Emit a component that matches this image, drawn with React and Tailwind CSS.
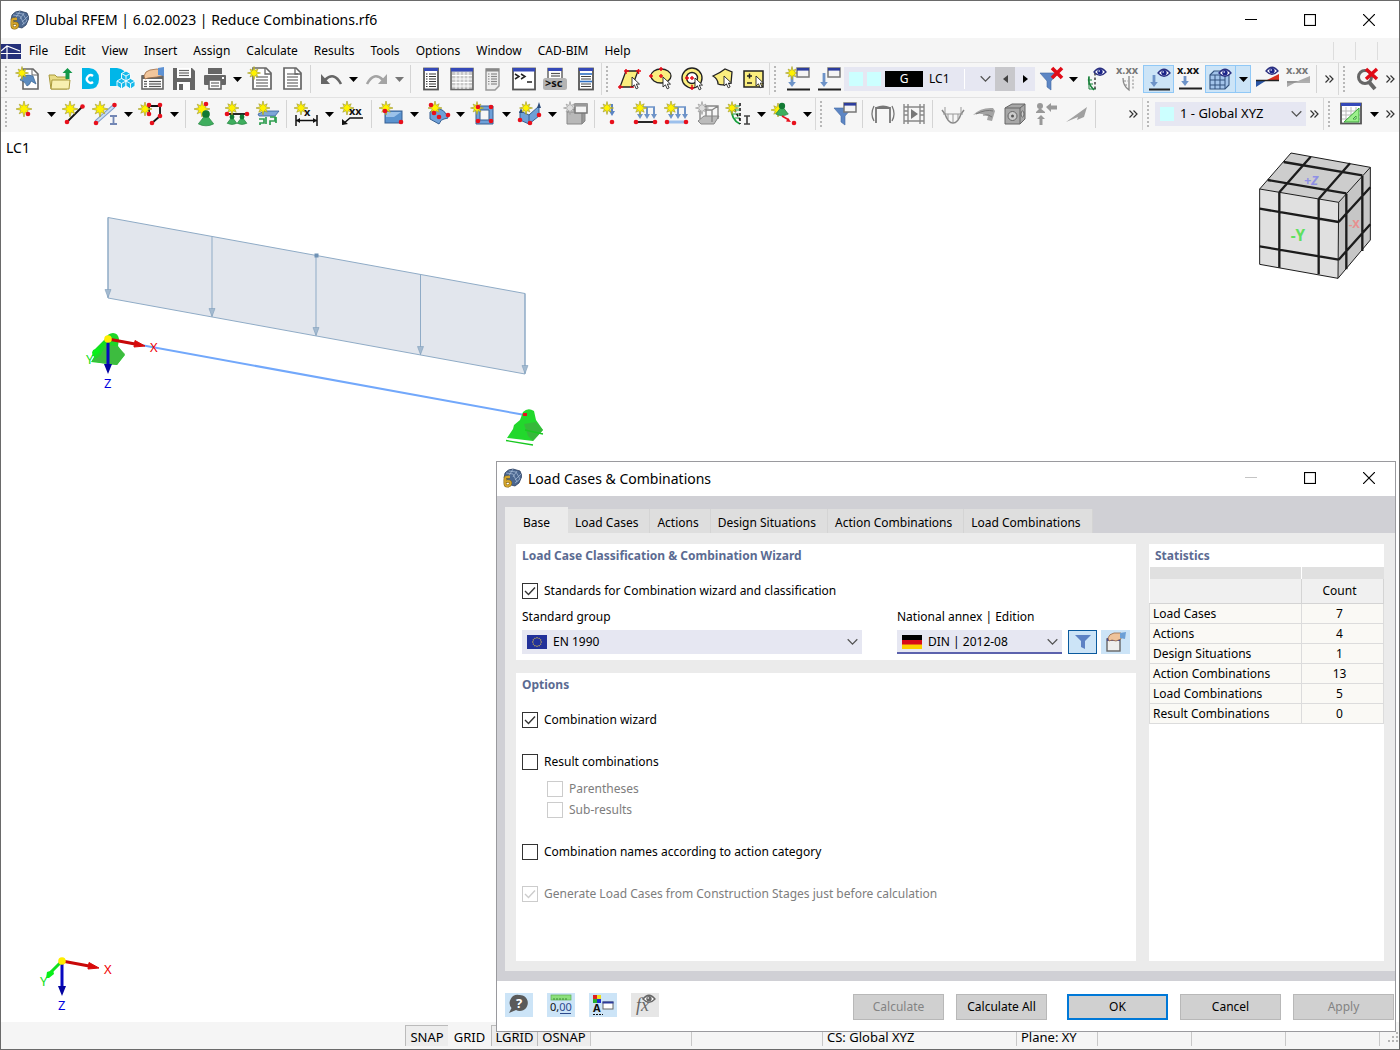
import { useState } from 'react';

const MENU = ['File', 'Edit', 'View', 'Insert', 'Assign', 'Calculate', 'Results', 'Tools', 'Options', 'Window', 'CAD-BIM', 'Help'];
const TABS = ['Base', 'Load Cases', 'Actions', 'Design Situations', 'Action Combinations', 'Load Combinations'];
const STATS = [
  ['Load Cases', 7],
  ['Actions', 4],
  ['Design Situations', 1],
  ['Action Combinations', 13],
  ['Load Combinations', 5],
  ['Result Combinations', 0],
];

const G = '#666666';
const RED = '#e8101c';

function Star({ x = 6, y = 6, r = 8, fill = '#fff200', stroke = '#a8a030' }) {
  const pts = [];
  for (let i = 0; i < 16; i++) {
    const rad = i % 2 ? r * 0.42 : i % 4 ? r * 0.85 : r;
    const a = (i * Math.PI) / 8;
    pts.push(`${(x + rad * Math.sin(a)).toFixed(1)},${(y - rad * Math.cos(a)).toFixed(1)}`);
  }
  return <polygon points={pts.join(' ')} fill={fill} stroke={stroke} strokeWidth="0.7" />;
}

const Dot = ({ x, y, r = 2.3 }) => <circle cx={x} cy={y} r={r} fill={RED} />;
const Cursor = ({ x, y }) => (
  <path d={`M${x} ${y}v10l2.4-2.2 1.8 4 1.9-.9-1.8-3.8h3.2z`} fill="#fff" stroke="#222" strokeWidth="0.9" />
);
const MiniWin = ({ x, y, gray }) => (
  <g>
    <rect x={x} y={y} width="12" height="9" fill="#f4f4f4" stroke="#777" strokeWidth="1.5" />
    <rect x={x} y={y} width="12" height="2.6" fill={gray ? '#999' : '#2c3c9c'} />
  </g>
);
const Eye = ({ x, y, gray }) => (
  <g>
    <path d={`M${x - 6} ${y}q6 -7.500 12 0q-6 6.500 -12 0z`} fill="#fff" stroke={gray ? G : '#2a2f80'} strokeWidth="1.3" />
    <circle cx={x} cy={y - 0.2} r="2.7" fill={gray ? G : '#1c2488'} />
    <circle cx={x - 0.8} cy={y - 1} r="0.8" fill="#fff" />
  </g>
);
const Down = ({ x, y1, y2, c = '#6d93c8', w = 2.8 }) => (
  <g>
    <path d={`M${x} ${y1}V${y2 - 3}`} stroke={c} strokeWidth={w} />
    <path d={`M${x - w - 1} ${y2 - 5}h${2 * w + 2}L${x} ${y2}z`} fill={c} />
  </g>
);
const Funnel = ({ c = '#5d86c4' }) => <path d="M2 6h18l-7 8v9l-4-3v-6z" fill={c} stroke="#4168a4" strokeWidth="0.6" />;
const Cone = ({ x, y, s = 1 }) => (
  <g>
    <path d={`M${x} ${y}l${7 * s} ${9 * s}q${-7 * s} ${3.500 * s} ${-14 * s} 0z`} fill="#3fae5e" stroke="#1b7a38" strokeWidth="0.6" />
    <circle cx={x} cy={y} r={3.5 * s} fill="#127a34" />
  </g>
);
const Lines = ({ x1, x2, ys, c = '#555', w = 1.2 }) => ys.map((y) => <path key={y} d={`M${x1} ${y}H${x2}`} stroke={c} strokeWidth={w} />);
const T = ({ x, y, size = 8, c = '#111', children }) => (
  <text x={x} y={y} fontSize={size} fill={c} fontWeight="700" fontFamily="Noto Sans, sans-serif">{children}</text>
);

const ICONS = {
  newModel: <><path d="M6 2h10l5 5v15H6z" fill="#fff" stroke={G} strokeWidth="1.600" /><path d="M15 2v6h6" fill="none" stroke={G} /><path d="M3 13q4-7 13-4l3 8-5-3q-1 4-4 5-2-5-7-6z" fill="#5c8cc0" stroke="#37618f" strokeWidth="0.7" /><Star x={5} y={6} r={6.500} /></>,
  open: <><path d="M1 8h6l2 2h10v12H3z" fill="#e9dc86" stroke="#a99a3c" /><path d="M3 22l1-9h18l-1 9z" fill="#f8f0b0" stroke="#a99a3c" /><path d="M19.500 1l5 5h-3v6h-4V6h-3z" fill="#14984a" /></>,
  dlubal: <><path d="M3 1h7q10 1 10 11t-10 10H3z" fill="#00b6e8" /><path d="M14 9a3.800 3.800 0 1 0 0 6" fill="none" stroke="#fff" strokeWidth="2.300" /></>,
  dlubalCube: <><path d="M0 1h7q9 1 9 9t-8 9H0z" fill="#00b6e8" /><g fill="#18b9ea" stroke="#fff" strokeWidth="0.9"><path d="M16 4l4.500 2.500v5L16 14l-4.500-2.500v-5z" /><path d="M11.500 11.500L16 14v5l-4.500 3L7 19v-5z" /><path d="M20.500 11.500L25 14v5l-4.500 3-4.500-3v-5z" /><path d="M11.500 6.500L16 9l4.500-2.500M16 9v5M7 14l4.500 2.500L16 14l4.500 2.500L25 14M11.500 16.500V22M20.500 16.500V22" fill="none" /></g></>,
  handList: <><rect x="1" y="9" width="21" height="13" fill="#fff" stroke={G} strokeWidth="1.600" /><rect x="1" y="8" width="21" height="4" fill={G} /><Lines x1={8} x2={20} ys={[14.5, 17, 19.5]} /><Lines x1={3} x2={6} ys={[14.5, 17, 19.5]} /><path d="M3 9q1-5 6-6l7-1 5 1v6l-5 1-9 1-3 1z" fill="#f2c69c" stroke="#9c6b45" strokeWidth="0.8" /><path d="M17 1l6-1v9l-6-1z" fill="#5e92d4" /></>,
  save: <><path d="M1 1h19l3 3v19H1z" fill={G} /><rect x="5" y="1" width="14" height="10" fill="#fff" /><Lines x1={7} x2={17} ys={[3.5, 6, 8.5]} c={G} /><rect x="5" y="15" width="13" height="8" fill="#fff" /><rect x="7" y="17" width="4" height="6" fill={G} /></>,
  print: <><rect x="5" y="1" width="14" height="7" fill={G} /><rect x="1" y="8" width="22" height="10" rx="1" fill={G} /><path d="M4 7.500h16" stroke="#f6f6f6" /><rect x="6" y="13" width="12" height="9" fill="#fff" stroke={G} strokeWidth="1.600" /><Lines x1={8} x2={16} ys={[16, 19]} c={G} /><rect x="19" y="10" width="2" height="2" fill="#fff" /></>,
  reportNew: <><path d="M4 1h13l5 5v16H4z" fill="#fff" stroke={G} strokeWidth="1.700" /><path d="M16 1v6h6" fill="none" stroke={G} strokeWidth="1.300" /><Lines x1={7} x2={19} ys={[10, 13, 16, 19]} c={G} /><Star x={5} y={6} r={6.500} /></>,
  report: <><path d="M4 1h12l5 5v16H4z" fill="#fff" stroke={G} strokeWidth="1.700" /><path d="M15 1v6h6" fill="none" stroke={G} strokeWidth="1.300" /><Lines x1={7} x2={18} ys={[7, 10, 13, 16, 19]} c={G} /></>,
  undo: <><path d="M6 13q9-9 16 4" fill="none" stroke={G} strokeWidth="2.600" /><path d="M2 7v10h9z" fill={G} /></>,
  redo: <><path d="M18 13q-9-9-16 4" fill="none" stroke="#a4a4a4" strokeWidth="2.600" /><path d="M22 7v10h-9z" fill="#a4a4a4" /></>,
  navi: <><rect x="5" y="1.500" width="14" height="21" fill="#fff" stroke="#555" strokeWidth="1.800" /><rect x="5" y="1" width="14" height="3" fill="#3549b8" /><Lines x1={10} x2={17} ys={[7, 9.5, 12, 14.5, 17, 19.5]} c="#333" w={1} /><Lines x1={7} x2={8.500} ys={[7, 9.5, 12, 14.5, 17, 19.5]} c="#333" w={1} /></>,
  table: <><rect x="1" y="1.500" width="22" height="21" fill="#c8c8c8" stroke="#666" strokeWidth="1.600" /><rect x="1" y="1" width="22" height="3.500" fill="#3549b8" /><path d="M2 8.500h20M2 12h20M2 15.500h20M2 19h20M6 5v17M10 5v17M14 5v17M18 5v17" stroke="#fff" strokeWidth="1" /></>,
  naviGray: <><path d="M5 2h13v17l-4 4H5z" fill="#eee" stroke="#999" strokeWidth="1.500" /><rect x="5" y="1.500" width="13" height="3" fill="#888" /><Lines x1={10} x2={16} ys={[7, 9.5, 12, 14.5, 17]} c="#888" w={1.200} /><Lines x1={7} x2={8.500} ys={[7, 9.5, 12, 14.5, 17]} c="#888" w={1.200} /></>,
  console: <><rect x="1" y="1.500" width="22" height="21" fill="#fff" stroke="#555" strokeWidth="1.800" /><rect x="1" y="1" width="22" height="3.500" fill="#3549b8" /><path d="M3 7l4 2.500L3 12M9 7l4 2.500L9 12M15 15h5" fill="none" stroke="#222" strokeWidth="1.500" /></>,
  script: <><rect x="5" y="1.500" width="14" height="12" fill="#fff" stroke="#666" strokeWidth="1.500" /><rect x="5" y="1" width="14" height="3" fill="#3549b8" /><Lines x1={8} x2={17} ys={[6.5, 9]} /><rect x="0" y="11" width="24" height="12" rx="2.500" fill="#b4b4b4" /><T x={2} y={20} size={11}>&gt;sc</T></>,
  naviBlue: <><rect x="5" y="1.500" width="14" height="21" fill="#fff" stroke="#555" strokeWidth="1.800" /><rect x="5" y="1" width="14" height="3" fill="#3549b8" /><Lines x1={7} x2={17} ys={[9.5, 12, 17, 19.5]} c="#444" w={1} /><Lines x1={6} x2={18} ys={[7, 14.5]} c="#2d6fc4" w={1.600} /></>,
  selRhomb: <><path d="M8 4h12l-6 16H2z" fill="#fbee7e" stroke="#222" strokeWidth="1.300" /><path d="M6 4h5M8 2v5M18 4h5M20.500 2v5M0 20h5M2 18v4M12 20h4" stroke={RED} strokeWidth="1.500" /><Cursor x={14} y={10} /></>,
  selCircle: <><ellipse cx="12" cy="9" rx="10" ry="7" fill="#fbee7e" stroke="#222" strokeWidth="1.300" /><path d="M10 9h4M12 7v4M0 9h4M2 7v4M12 0v4M10 2h4" stroke={RED} strokeWidth="1.500" /><Cursor x={14} y={10} /></>,
  selRing: <><circle cx="12" cy="11" r="10" fill="#fbee7e" stroke="#222" strokeWidth="1.400" /><circle cx="12" cy="11" r="5.500" fill="#fff" stroke="#222" strokeWidth="1.400" /><path d="M10 11h4M12 9v4M5 11h4M7 9v4M12 18v5M10 21h4" stroke={RED} strokeWidth="1.500" /><Cursor x={15} y={11} /></>,
  selPoly: <><path d="M2 9q7-3 12-7l7 3-1 11q-8 3-13 1 0-5-5-8z" fill="#fbee7e" stroke="#222" strokeWidth="1.300" /><Cursor x={13} y={9} /></>,
  selPm: <><rect x="2" y="4" width="19" height="16" fill="#fbee7e" stroke="#222" strokeWidth="1.500" /><path d="M5 9h5M7.500 6.500v5M5 16h5" stroke="#222" strokeWidth="1.500" /><Cursor x={14} y={9} /></>,
  lcNew: <><path d="M1 22.500h23" stroke="#222" strokeWidth="2" /><Down x={6} y1={6} y2={20} /><Star x={6} y={6} r={6.500} /><MiniWin x={11} y={1} /></>,
  lcEdit: <><path d="M1 22.500h23" stroke="#222" strokeWidth="2" /><Down x={7} y1={6} y2={20} /><MiniWin x={11} y={1} /></>,
  filterX: <><g transform="translate(-1 0)"><Funnel /></g><path d="M13 1l10 10M23 1L13 11" stroke="#e00b17" strokeWidth="3.600" /></>,
  eyeLoad: <><path d="M4 10q-2 6 5 13" fill="none" stroke="#19803a" strokeWidth="1.500" /><path d="M4 9v13h7M3 13h4M3 17h5" stroke="#19803a" fill="none" /><path d="M10 6v17" stroke="#222" strokeDasharray="2.500 2" strokeWidth="1.300" /><Eye x={15} y={5} /></>,
  xxxLoad: <><T x={0} y={7} size={11} c="#777">x.xx</T><path d="M7 11q0 8 6 12V9" fill="none" stroke="#888" strokeWidth="1.300" /><path d="M8 14h4M9 18h3M17 9v14" stroke="#888" strokeDasharray="2 1.500" /></>,
  eyeArrow: <><path d="M2 22.500h21" stroke="#222" strokeWidth="2" /><Down x={7} y1={8} y2={20} /><Eye x={17} y={6} /></>,
  xxxArrow: <><T x={-1} y={7} size={11}>x.xx</T><path d="M1 21.500h23" stroke="#222" strokeWidth="2" /><Down x={7} y1={9} y2={19} /></>,
  eyeGrid: <><path d="M1 8l4-4h15v14l-4 4H1z" fill="#a3c4ea" stroke="#33537e" strokeWidth="1.100" /><path d="M1 13h15M1 18h15M6 8v14M11 8v14M1 8h15v14" stroke="#33537e" fill="none" /><Eye x={16} y={6} /></>,
  eyeWedge: <><path d="M1 13h11L1 20z" fill="#2a55a5" /><path d="M12 13l12-6v6z" fill="#d6301e" /><path d="M1 13.500h23" stroke="#222" strokeWidth="1.500" /><Eye x={17} y={4} /></>,
  xxxWedge: <><T x={0} y={7} size={11} c="#777">x.xx</T><path d="M1 14h11L1 20zM12 14l12-5v5z" fill="#aaa" /><path d="M1 15h23" stroke="#888" strokeWidth="1.300" /></>,
  findX: <><circle cx="10" cy="10" r="6.500" fill="none" stroke="#666" strokeWidth="3" /><path d="M14 15l6 7" stroke="#666" strokeWidth="4" /><path d="M11 2l11 10M22 2L11 12" stroke="#e00b17" strokeWidth="3.400" /></>,

  node: <><Star x={7} y={7} /><Dot x={11} y={12} /></>,
  line: <><path d="M4 20L19 5" stroke="#111" strokeWidth="1.800" /><Star x={7} y={7} /><Dot x={4} y={20} /><Dot x={19.5} y={4.500} /></>,
  member: <><path d="M2 20L20 4" stroke="#7c9bc8" strokeWidth="4" /><path d="M2 20L20 4" stroke="#c8dcf4" strokeWidth="2" /><path d="M16 14h7M16 22h7M19.500 14v8" stroke="#7286b4" strokeWidth="1.800" /><Star x={6} y={7} /><Dot x={2} y={21} /><Dot x={20.5} y={3} /></>,
  polyline: <><path d="M9 12V4h11v10l-8 7" fill="none" stroke="#111" strokeWidth="1.800" /><Star x={5} y={7} r={7} /><Dot x={9} y={3} /><Dot x={20} y={3} /><Dot x={20} y={14} /><Dot x={12} y={21} /><Dot x={9} y={12} /></>,
  support: <><Star x={8} y={7} /><Cone x={12} y={12} s={1.100} /><Dot x={12} y={2} /></>,
  lineSupport: <><path d="M2 12h20" stroke="#111" strokeWidth="1.800" /><Cone x={7} y={15} s={0.700} /><Cone x={17} y={15} s={0.700} /><Star x={7} y={6} r={7} /><Dot x={2} y={12} /><Dot x={22} y={12} /></>,
  surfSupport: <><path d="M2 12l7-3h14l-4 5H3z" fill="#7ea6d8" stroke="#35609c" strokeWidth="0.800" /><path d="M3 17h5v4H4v2M10 15v7M14 15h5v4h-5v4M20 15v6" fill="none" stroke="#2f9e50" strokeWidth="1.700" /><Star x={7} y={6} r={7} /></>,
  dimX: <><path d="M1 13v11M22 13v11M1 18.500h21" stroke="#111" strokeWidth="1.500" /><path d="M1 18.500l4-2.500v5zM22 18.500l-4-2.500v5z" fill="#111" /><Star x={6} y={6} r={7} /><T x={9} y={14} size={11}>x</T></>,
  dimXX: <><path d="M22 16H9l-7 6" fill="none" stroke="#111" strokeWidth="1.500" /><path d="M1 23v-6l6 5z" fill="#111" /><Star x={6} y={6} r={7} /><T x={8} y={13} size={11}>xx</T></>,
  surface: <><rect x="5" y="9" width="17" height="12" fill="#5b93cf" stroke="#365f92" /><path d="M6 10h15l-7 5H6z" fill="#9cc2ea" /><Star x={6} y={6} r={7} /><Dot x={5} y={9} /><Dot x={21} y={20} /></>,
  shell: <><path d="M4 10q10-8 17 3l1 3-4 1q-3 0-5 5l-9-5z" fill="#6ea0d8" stroke="#365f92" /><Star x={9} y={6} r={7} /><Dot x={5} y={3} /><Dot x={8} y={11} /><Dot x={13} y={15} /><Dot x={22} y={13} /></>,
  opening: <><path d="M4 4h17v18H4zM8 8v10h9V8z" fillRule="evenodd" fill="#6ea0d8" stroke="#365f92" /><Star x={5} y={6} r={6.500} /><Dot x={6} y={5} /><Dot x={19} y={5} /><Dot x={6} y={19} /><Dot x={19} y={19} /></>,
  solid: <><path d="M2 9l9 4 10-9v10l-10 8-9-4z" fill="#6ea0d8" stroke="#365f92" /><path d="M11 13v9" stroke="#365f92" /><path d="M21 0l2 6h-4zM3 6l2 5H1z" fill="#2c4a78" /><Star x={8} y={6} r={6.500} /><Dot x={2} y={18} /><Dot x={12} y={21} /><Dot x={21} y={13} /></>,
  blockGray: <><path d="M3 10h15v12H3z" fill="#b8b8b8" stroke="#888" /><path d="M3 10l4-3h14l-3 3v12l3-3V7" fill="#999" stroke="#888" /><Star x={6} y={6} r={6.500} fill="#ddd" stroke="#999" /><MiniWin x={11} y={2} gray /></>,
  nodeLoad: <><Down x={9} y1={2} y2={14} c="#5b84c4" w={2} /><Star x={4} y={6} r={6.500} /><Dot x={9} y={20} /></>,
  lineLoad: <><path d="M2 20h19" stroke="#111" strokeWidth="1.800" /><path d="M6 5h15" stroke="#6d93c8" strokeWidth="1.500" /><Down x={6} y1={5} y2={17} w={2} /><Down x={13} y1={5} y2={17} w={2} /><Down x={20} y1={5} y2={17} w={2} /><Star x={6} y={6} r={7} /><Dot x={2} y={20} /><Dot x={21} y={20} /></>,
  memberLoad: <><path d="M2 20h19" stroke="#9cc0ec" strokeWidth="3" /><path d="M6 5h15" stroke="#6d93c8" strokeWidth="1.500" /><Down x={6} y1={5} y2={17} w={2} /><Down x={13} y1={5} y2={17} w={2} /><Down x={20} y1={5} y2={17} w={2} /><Star x={6} y={6} r={7} /><Dot x={2} y={20} /><Dot x={21} y={20} /></>,
  surfLoadGray: <><path d="M2 19l6-5h15l-5 8H5z" fill="#bbb" stroke="#888" /><path d="M4 17V8l6-4h12v13M4 8h12v12M16 8l6-4M10 4v10" fill="none" stroke="#888" strokeWidth="1.400" /><Star x={6} y={6} r={6.500} fill="#ddd" stroke="#999" /></>,
  imperf: <><path d="M4 4q0 14 9 18" fill="none" stroke="#15a03c" strokeWidth="1.800" /><path d="M5 8h7M6 12h6M8 16h5M4 4l9 0" stroke="#15a03c" /><path d="M13 1v21M5 3l8 15" stroke="#111" strokeDasharray="3 2" strokeWidth="1.500" /><path d="M17 14h6M17 22h6M20 14v8" stroke="#444" strokeWidth="1.700" /><Star x={5} y={6} r={6.500} /></>,
  impDisp: <><Star x={5} y={8} r={7} /><Cone x={9} y={4} s={0.900} /><path d="M9 14l7 4" stroke={RED} strokeWidth="1.500" /><path d="M18 20l-5-.5 2-3.500z" fill={RED} /><Dot x={21} y={21} /></>,

  filterWin: <><Funnel /><MiniWin x={12} y={1} /></>,
  frame: <><path d="M5 21V6h14v15M5 6q7-3 14 0" fill="none" stroke="#777" strokeWidth="1.800" /><path d="M3 4q-4 8 0 15M21 4q4 8 0 15" fill="none" stroke="#777" strokeWidth="1.300" /></>,
  film: <><path d="M2 2v20M22 2v20M2 5h20M2 19h20M6 2v20M18 2v20M2 9h4M2 13h4M18 9h4M18 13h4" stroke="#888" strokeWidth="1.400" /><path d="M9 7v10l7-5z" fill="#777" /></>,
  moment: <><path d="M1 8l3 4q3 9 8 9t8-9l3-4" fill="none" stroke="#888" strokeWidth="1.500" /><path d="M2 12h20M4 5v7M20 5v7M7 12v5M12 12v8M17 12v5" stroke="#999" /></>,
  wave: <><path d="M1 13q8-8 20-7l2 3-3 10-5-1 1-4q-7-4-15-1z" fill="#a4a4a4" /><path d="M4 12q10-5 17-3M11 13q6-1 9 2" stroke="#777" fill="none" /></>,
  dice: <><path d="M2 6l7-4h13v15l-5 5H2z" fill="#a8a8a8" stroke="#666" /><path d="M2 6h15v16M17 6l5-4" fill="none" stroke="#666" /><circle cx="9.500" cy="14" r="4.500" fill="#ccc" stroke="#666" /><circle cx="9.500" cy="14" r="1.500" fill="#555" /><ellipse cx="19.500" cy="12" rx="1.500" ry="3" fill="#ccc" stroke="#666" /></>,
  cubeArrows: <><circle cx="6" cy="4" r="3" fill="#999" /><path d="M2 10l4-4 5 4v1H2zM7 13l4 4H8.500v6h-3v-6H3zM12 5l5-4v2.500h6v4h-6V10z" fill="#999" /></>,
  wedge: <><path d="M1 20L22 5l-3 10-7 3 1-3z" fill="#a0a0a0" /></>,
  gridTri: <><rect x="1" y="1.500" width="20" height="20" fill="#fff" stroke="#555" strokeWidth="1.800" /><rect x="1" y="1" width="20" height="3" fill="#3549b8" /><path d="M2 9h18M2 13h18M2 17h18M6 5v16M11 5v16M16 5v16" stroke="#bbb" /><path d="M4 20L19 6v14z" fill="#9cf08c" stroke="#3aa33a" /><path d="M13 17h3v-3z" fill="#fff" stroke="#3aa33a" /></>,
};

const ROW1 = ['newModel', 'open', 'dlubal', 'dlubalCube', 'handList', 'save', 'print', 'v', 'reportNew', 'report', '|', 'undo', 'v', 'redo', 'vg', '|', 'navi', 'table', 'naviGray', 'console', 'script', 'naviBlue', ':', 'selRhomb', 'selCircle', 'selRing', 'selPoly', 'selPm', ':', 'lcNew', 'lcEdit'];
const ROW2 = ['node', 'v', 'line', 'member', 'v', 'polyline', 'v', '|', 'support', 'lineSupport', 'surfSupport', '|', 'dimX', 'v', 'dimXX', '|', 'surface', 'v', 'shell', 'v', 'opening', 'v', 'solid', 'v', 'blockGray', '|', 'nodeLoad', 'lineLoad', 'memberLoad', 'surfLoadGray', 'imperf', 'v', 'impDisp', 'v', ':', 'filterWin', '|', 'frame', 'film', '|', 'moment', 'wave', 'dice', 'cubeArrows', 'wedge', '|'];

function Icon({ name }) {
  return <svg width="24" height="24" viewBox="0 0 24 24" className="shrink-0 overflow-visible">{ICONS[name]}</svg>;
}

function Tool({ name, active }) {
  return (
    <button type="button" aria-label={name}
      className={`flex h-7 w-[31px] shrink-0 items-center justify-center ${active ? 'border border-[#90c8f6] bg-[#cce4f7]' : ''}`}>
      <Icon name={name} />
    </button>
  );
}

function DropArrow({ gray, active }) {
  return (
    <button type="button" aria-label="More" className={`flex h-7 w-[15px] shrink-0 items-center justify-center ${active ? 'border border-l-0 border-[#90c8f6] bg-[#cce4f7]' : ''}`}>
      <svg width="9" height="5" viewBox="0 0 9 5"><path d="M0 0h9L4.500 5z" fill={gray ? '#777' : '#000'} /></svg>
    </button>
  );
}

const Sep = () => <div className="ml-[3px] mr-1 h-7 w-px shrink-0 bg-[#d4d4d4]" />;

function Grip({ first }) {
  return (
    <div className={`flex h-full shrink-0 items-center ${first ? 'w-3 pl-1' : 'w-[13px] border-l border-[#d8d8d8] pl-1'}`}>
      <div className="h-[26px] border-l-2 border-dotted border-[#b8b8b8]" />
    </div>
  );
}

const More = () => (
  <button type="button" aria-label="More tools" className="flex h-7 w-[17px] shrink-0 items-center justify-center">
    <svg width="9" height="8" viewBox="0 0 9 8"><path d="M.5 .5L4 4 .5 7.500M4.500 .5L8 4 4.500 7.500" fill="none" stroke="#333" strokeWidth="1.200" /></svg>
  </button>
);

function ToolItems({ items }) {
  return items.map((it, i) => {
    if (it === 'v') return <DropArrow key={i} />;
    if (it === 'vg') return <DropArrow key={i} gray />;
    if (it === '|') return <Sep key={i} />;
    if (it === ':') return <Grip key={i} />;
    return <Tool key={i} name={it} />;
  });
}

const Chevron = () => (
  <svg width="11" height="7" viewBox="0 0 11 7" className="pointer-events-none absolute right-1 top-1/2 -translate-y-1/2">
    <path d="M.7 .8l4.800 4.800L10.300 .8" fill="none" stroke="#555" strokeWidth="1.300" />
  </svg>
);

const AppLogo = () => (
  <svg width="20" height="20" viewBox="0 0 20 20">
    <path d="M3 5q3-4 8-4l7 2 2 5-3 7-4 3-4-1-4-6-3-1z" fill="#4b6790" stroke="#2c3f60" strokeWidth="0.800" />
    <path d="M4 5l7 1 4 8M7 3l7 1 4 7M11 1L8 6l-2 3M15 3l-4 6M19 6l-6 6M18 11l-5 4" stroke="#a9bdd8" fill="none" strokeWidth="0.700" />
    <path d="M8 9H4.500Q3 9 3 12v3q0 3 2.500 3T8.500 15.500t-3-2.500L3 14" fill="none" stroke="#8a6a14" strokeWidth="3" />
    <path d="M8 9H4.500Q3 9 3 12v3q0 3 2.500 3T8.500 15.500t-3-2.500L3 14" fill="none" stroke="#d3a42c" strokeWidth="1.800" />
  </svg>
);

function WindowButtons({ dim }) {
  return (
    <div className="ml-auto flex gap-[7px]">
      <button type="button" aria-label="Minimize" className="flex h-8 w-13 items-center justify-center">
        <svg width="12" height="12" viewBox="0 0 12 12"><path d="M0 5.500h12" stroke={dim ? '#c4c4c4' : '#000'} /></svg>
      </button>
      <button type="button" aria-label="Maximize" className="flex h-8 w-13 items-center justify-center">
        <svg width="12" height="12" viewBox="0 0 12 12"><rect x=".5" y=".5" width="11" height="11" fill="none" stroke="#000" strokeWidth="1.200" /></svg>
      </button>
      <button type="button" aria-label="Close" className="flex h-8 w-13 items-center justify-center">
        <svg width="12" height="12" viewBox="0 0 12 12"><path d="M0 0l12 12M12 0L0 12" stroke="#000" strokeWidth="1.200" /></svg>
      </button>
    </div>
  );
}

function Axes({ x, y }) {
  return (
    <g transform={`translate(${x} ${y})`} fontFamily="Noto Sans, sans-serif" fontSize="13">
      <path d="M0 0v26" stroke="#0808c0" strokeWidth="3" />
      <path d="M-4 25h8L0 35z" fill="#0404a0" />
      <path d="M0 0l27 5" stroke="#c80808" strokeWidth="3" />
      <path d="M27 1.500L37 7l-11 1z" fill="#d80a0a" stroke="#d80a0a" />
      <path d="M0 0l-11 11" stroke="#10e020" strokeWidth="3" />
      <path d="M-15 11l6-2 1 4-5 4-3 0z" fill="#08f018" />
      <circle r="3.800" fill="#ffee00" />
      <text x="42" y="13" fill="#f00000">X</text>
      <text x="-22" y="25" fill="#10e020">Y</text>
      <text x="-4" y="49" fill="#0000e0">Z</text>
    </g>
  );
}

function Model() {
  const arrows = [[108, 217.5], [212, 236.5], [316, 255.5], [420.5, 274.5], [525, 293.5]];
  return (
    <svg width="560" height="330" viewBox="1 132 560 330" className="block">
      <path d="M108 217.500L525 293.500V374L108 298z" fill="#e2e6ed" stroke="#8fabc6" />
      {arrows.map(([x, y]) => (
        <g key={x}>
          <path d={`M${x} ${y}v80`} stroke="#8fabc6" />
          <path d={`M${x - 3} ${y + 72}h6l-3 8z`} fill="#a3bad0" stroke="#7f9dbb" strokeWidth="0.600" />
        </g>
      ))}
      <rect x="314.500" y="253.500" width="4" height="4" fill="#6f92b5" />
      <path d="M108 339L525 415" stroke="#72a8fb" strokeWidth="2" />
      <path d="M92 352l13-13q3-6 8-6 5 0 6 6l-1 7 7 9-8 10-26-3 3-5z" fill="#1fd628" />
      <path d="M106 345l11 1 8 8-8 11-11-1-14-3 8-5z" fill="#45b545" fillOpacity="0.800" />
      <path d="M514 425l6-5 3-8q5-5 11-1l2 9 7 10-10 11-26-3 6-9z" fill="#22d82c" />
      <path d="M524 424l12-2 7 8-10 11-5-5z" fill="#3db03f" fillOpacity="0.800" />
      <path d="M506 440.500l27 4.500M525 430l18 4" stroke="#18c820" strokeWidth="1.300" />
      <rect x="523" y="413" width="4" height="3" fill="#e81020" />
      <Axes x={108} y={339} />
    </svg>
  );
}

function NavCube() {
  return (
    <svg width="150" height="150" viewBox="0 0 450 450" fontFamily="Noto Sans, sans-serif" fontWeight="700">
      <path d="M59 147l94-108 238 43-95 105z" fill="#cdcdcd" />
      <path d="M59 147l237 40-2 228-235-42z" fill="#e0e0e0" />
      <path d="M296 187l95-105v218l-97 115z" fill="#c6c6c6" />
      <g fill="none" stroke="#1c1c1c" strokeWidth="7">
        <path d="M118 157v226M236 177v226M59 206l237 40M59 319l237 40" />
        <path d="M319 162v226M367 108v225M296 246l95-104M296 359l95-106" />
        <path d="M83 120l236 40M131 66l236 40M118 157l94-107M236 177l94-107" />
        <path d="M59 147l94-108 238 43v218l-97 115-235-42zM59 147l237 40 95-105M296 187l-2 228" strokeWidth="3" />
      </g>
      <text x="192" y="134" fontSize="38" fill="#8f90e6" fontStyle="italic">+Z</text>
      <text x="152" y="304" fontSize="46" fill="#5fe05f">-Y</text>
      <text x="326" y="264" fontSize="34" fill="#e88f8f">-X</text>
    </svg>
  );
}

function Check({ label, defaultChecked = false, disabled, className = '' }) {
  const [on, setOn] = useState(defaultChecked);
  return (
    <label className={`flex h-5 items-center gap-1.5 ${disabled ? 'text-[#7d7d7d]' : ''} ${className}`}>
      <span className="relative block size-4 shrink-0">
        <input type="checkbox" checked={on} disabled={disabled} onChange={() => setOn(!on)}
          className="block size-4 appearance-none border border-[#333] bg-white disabled:border-[#ccc]" />
        {on && (
          <svg viewBox="0 0 16 16" className="pointer-events-none absolute inset-0 size-4">
            <path d="M3 8l3.500 3.500L13 4.500" fill="none" stroke={disabled ? '#ccc' : '#333'} strokeWidth="1.400" />
          </svg>
        )}
      </span>
      <span>{label}</span>
    </label>
  );
}

const GroupTitle = ({ children }) => <h2 className="h-[23px] leading-[23px] font-bold text-[#5b6b92]">{children}</h2>;

function EuFlag() {
  const stars = Array.from({ length: 12 }, (_, i) => [10 + 4.2 * Math.sin((i * Math.PI) / 6), 7 - 4.2 * Math.cos((i * Math.PI) / 6)]);
  return (
    <svg width="20" height="14" viewBox="0 0 20 14" className="shrink-0">
      <rect width="20" height="14" fill="#22319a" />
      {stars.map(([x, y], i) => <circle key={i} cx={x} cy={y} r="0.700" fill="#d8b94a" />)}
    </svg>
  );
}

const DeFlag = () => (
  <svg width="20" height="14" viewBox="0 0 20 14" className="shrink-0">
    <path d="M0 0h20v5H0z" fill="#000" /><path d="M0 5h20v5H0z" fill="#d80b18" /><path d="M0 9.500h20V14H0z" fill="#fbd000" />
  </svg>
);

function BaseTab() {
  return (
    <div className="flex flex-1 gap-[13px] bg-[#ebebeb] px-[11px] pb-[10px] pt-[11px]">
      <div className="flex flex-1 flex-col gap-[13px]">
        <section className="bg-white px-1.5 pb-1.5">
          <GroupTitle>Load Case Classification &amp; Combination Wizard</GroupTitle>
          <Check label="Standards for Combination wizard and classification" defaultChecked className="mt-[14px]" />
          <div className="mt-[5px] flex gap-[35px]">
            <div className="flex-1">
              <label htmlFor="group" className="block h-6 leading-[22px]">Standard group</label>
              <div className="relative flex h-6 items-center bg-[#e6e7f2] pl-[5px]">
                <EuFlag />
                <select id="group" className="h-6 flex-1 appearance-none bg-transparent pl-1.5 outline-none"><option>EN 1990</option></select>
                <Chevron />
              </div>
            </div>
            <div>
              <label htmlFor="annex" className="block h-6 leading-[22px]">National annex | Edition</label>
              <div className="flex">
                <div className="relative flex h-6 w-[165px] items-center bg-[#e6e7f2] pl-[5px] shadow-[inset_0_-2px_0_#5c62ad]">
                  <DeFlag />
                  <select id="annex" className="h-6 flex-1 appearance-none bg-transparent pl-1.5 outline-none"><option>DIN | 2012-08</option></select>
                  <Chevron />
                </div>
                <button type="button" aria-label="Filter" className="ml-1.5 flex h-6 w-[29px] items-center justify-center border border-[#0a5a9e] bg-[#cce4f7]">
                  <svg width="18" height="16" viewBox="0 0 18 16"><path d="M1 1h16l-6 6v8l-4-2V7z" fill="#5d82c4" /></svg>
                </button>
                <button type="button" aria-label="Edit parameters" className="ml-1 flex h-6 w-[29px] items-center justify-center bg-[#cce4f7]">
                  <svg width="20" height="20" viewBox="0 0 20 20">
                    <rect x="1" y="7" width="13" height="12" fill="#eee" stroke="#666" strokeWidth="1.400" />
                    <rect x="1" y="6" width="13" height="3" fill="#444a9c" />
                    <path d="M2 6q1-4 6-5l7 0v6l-5 2-4-1-3 1z" fill="#eec39b" stroke="#94694a" strokeWidth="0.800" />
                    <path d="M14 1l6-1-1 7-5-1z" fill="#6da0d6" />
                  </svg>
                </button>
              </div>
            </div>
          </div>
        </section>
        <section className="flex-1 bg-white px-1.5">
          <GroupTitle>Options</GroupTitle>
          <Check label="Combination wizard" defaultChecked className="mt-[14px]" />
          <Check label="Result combinations" className="mt-[22px]" />
          <Check label="Parentheses" disabled className="ml-[25px] mt-[7px]" />
          <Check label="Sub-results" disabled className="ml-[25px] mt-px" />
          <Check label="Combination names according to action category" className="mt-[22px]" />
          <Check label="Generate Load Cases from Construction Stages just before calculation" defaultChecked disabled className="mt-[22px]" />
        </section>
      </div>
      <section className="w-[235px] bg-white">
        <div className="pl-1.5"><GroupTitle>Statistics</GroupTitle></div>
        <table className="w-full border-collapse">
          <thead>
            <tr className="h-3 bg-[#e0e0e0]"><td className="w-[152px] border-r border-white" /><td /></tr>
            <tr className="h-6 bg-[#f0f0f0]">
              <th aria-label="Item" className="border-b border-r border-[#d4d4d4]" />
              <th scope="col" className="border-b border-r border-[#d4d4d4] p-0 pr-1.5 text-center font-normal">Count</th>
            </tr>
          </thead>
          <tbody className="bg-[#faf9f5]">
            {STATS.map(([name, count]) => (
              <tr key={name} className="h-5">
                <th scope="row" className="border border-[#dcdcdc] p-0 pl-[3px] text-left font-normal leading-[19px]">{name}</th>
                <td className="border border-[#dcdcdc] p-0 pr-1.5 text-center leading-[19px]">{count}</td>
              </tr>
            ))}
          </tbody>
        </table>
      </section>
    </div>
  );
}

const FOOT_ICONS = [
  ['Help', <><path d="M14 2a8 8 0 1 1-3 15L4 20l2.500-5A8 8 0 0 1 14 2z" fill="#5a5a5a" /><text x="11" y="15" fontSize="13" fontWeight="700" fill="#fff">?</text></>],
  ['Units', <><rect x="4" y="2" width="20" height="5" fill="#8ce07c" stroke="#5cb050" strokeWidth="0.700" /><path d="M7 5v2M10 5v2M13 5v2M16 5v2M19 5v2" stroke="#3a8a34" /><text x="3" y="18" fontSize="11" fill="#111">0,<tspan fill="#2d4a8c">00</tspan></text><path d="M13 20.500h11" stroke="#2d4a8c" /></>],
  ['Display', <><path d="M4 2h4v4H4z" fill="#e02020" /><path d="M8 2h4v4H8z" fill="#f0e020" /><path d="M4 6h4v4H4z" fill="#28b030" /><path d="M8 6h4v4H8z" fill="#2030d0" /><text x="4" y="19" fontSize="11" fontWeight="700" fill="#111">A</text><path d="M4 21.500h10" stroke="#111" strokeDasharray="2 1" /><rect x="14" y="9" width="10" height="7" fill="#fff" stroke="#666" /><path d="M13.500 9.500h11" stroke="#2c3c9c" strokeWidth="2" /></>],
  ['Formula', <><text x="5" y="18" fontSize="18" fontStyle="italic" fontFamily="Liberation Serif, serif" fill="#666">fx</text><Eye x={18} y={6} gray /></>],
];

function DialogButton({ children, wide, primary, disabled }) {
  return (
    <button type="button" disabled={disabled}
      className={`h-[26px] bg-[#d0d0d0] ${wide ? 'w-[101px]' : 'w-[91px]'} ${primary ? 'border-2 border-[#0078d7]' : 'border border-[#b8b8b8]'} disabled:text-[#838383]`}>
      {children}
    </button>
  );
}

function Dialog() {
  const [tab, setTab] = useState('Base');
  return (
    <div role="dialog" aria-label="Load Cases & Combinations" className="absolute bottom-[17px] right-[3px] flex h-[571px] w-[900px] flex-col border border-[#9a9a9e] bg-white">
      <div className="flex h-[34px] shrink-0 items-center pb-0.5 pl-[5px] text-[14px]">
        <AppLogo />
        <span className="ml-1.5">Load Cases &amp; Combinations</span>
        <WindowButtons dim />
      </div>
      <div className="flex flex-1 flex-col bg-[#d0d0d5] pb-2.5 pl-2 pt-[11px]">
        <div role="tablist" className="flex items-end">
          {TABS.map((t) => (
            <button key={t} type="button" role="tab" aria-selected={t === tab} onClick={() => setTab(t)}
              className={t === tab ? 'h-[26px] bg-[#ebebeb] px-[18px] pt-1.5' : 'h-6 border-r border-[#d4d4d4] bg-[#dedede] pl-[7px] pr-[11px] pt-1'}>
              {t}
            </button>
          ))}
        </div>
        <BaseTab />
      </div>
      <div className="flex h-[50px] shrink-0 items-center pl-2 pr-px">
        <div className="flex gap-[14px] pb-0.5">
          {FOOT_ICONS.map(([name, art], i) => (
            <button key={name} type="button" aria-label={name} className={`h-6 w-7 ${i === 3 ? 'bg-[#e6e6e6]' : 'bg-[#cce4f7]'}`}>
              <svg width="28" height="24" viewBox="0 0 28 24" className="block">{art}</svg>
            </button>
          ))}
        </div>
        <div className="ml-auto flex items-center gap-3 pt-0.5">
          <DialogButton disabled>Calculate</DialogButton>
          <DialogButton>Calculate All</DialogButton>
          <div className="ml-2 flex gap-3">
            <DialogButton wide primary>OK</DialogButton>
            <DialogButton wide>Cancel</DialogButton>
            <DialogButton wide disabled>Apply</DialogButton>
          </div>
        </div>
      </div>
    </div>
  );
}

function StatusBar() {
  const cell = 'flex items-center border-l border-[#c8c8c8] pt-1';
  const toggle = 'border-l border-t border-[#bbb] bg-[#ededed] pt-0.5';
  return (
    <footer className="flex h-[27px] shrink-0 justify-end bg-[#f5f5f5] py-[3px] text-[13px]">
      <button type="button" className={`${toggle} w-[43px]`}>SNAP</button>
      <button type="button" className="w-[43px] pt-[3px]">GRID</button>
      <button type="button" className={`${toggle} w-[46px]`}>LGRID</button>
      <button type="button" className={`${toggle} w-[53px]`}>OSNAP</button>
      <div className={`${cell} w-[101px]`} />
      <div className={`${cell} w-[131px]`} />
      <div className={`${cell} w-[194px] pl-1`}>CS: Global XYZ</div>
      <div className={`${cell} w-[81px] pl-1`}>Plane: XY</div>
      <div className={`${cell} w-[94px]`} />
      <div className={`${cell} w-[94px]`} />
      <div className={`${cell} w-[94px]`} />
      <div className={`${cell} w-5 justify-end`}>
        <svg width="11" height="11" viewBox="0 0 11 11"><path d="M8 0h2v2H8zM8 4h2v2H8zM4 4h2v2H4zM8 8h2v2H8zM4 8h2v2H4zM0 8h2v2H0z" fill="#b4b4b4" /></svg>
      </div>
    </footer>
  );
}

export default function App() {
  return (
    <div className="relative flex min-h-screen flex-col border border-[#6a6a6a] bg-white font-['Noto_Sans',sans-serif] text-[12px] text-black">
      <header className="flex h-[37px] shrink-0 items-center pl-2 pr-1 text-[14px]">
        <AppLogo />
        <span className="ml-1.5">Dlubal RFEM | 6.02.0023 | Reduce Combinations.rf6</span>
        <WindowButtons />
      </header>

      <nav className="flex h-6 shrink-0 items-center bg-[#f5f5f5] pt-0.5">
        <svg width="20" height="15" viewBox="0 0 20 15">
          <path d="M0 0h20v15H0z" fill="#24307a" />
          <path d="M0 9.500h20M0 7L6 2l13 5M6 2v13" fill="none" stroke="#fff" strokeWidth="1.200" />
        </svg>
        {MENU.map((m) => <button key={m} type="button" className="px-2">{m}</button>)}
        <div className="ml-auto flex h-[18px]">
          <div className="w-[22px] border-l border-[#ddd]" />
          <div className="w-[22px] border-l border-[#ddd]" />
          <div className="w-[22px] border-l border-[#ddd]" />
        </div>
      </nav>

      <div className="flex h-[35px] shrink-0 items-center border-t border-[#e2e2e2] bg-[#f6f6f6] pb-0.5">
        <Grip first />
        <ToolItems items={ROW1} />
        <div className="relative flex h-6 w-[151px] shrink-0 items-center gap-1 bg-[#e6e7f2] pl-[5px]">
          <span className="size-[14px] bg-[#ccffff]" />
          <span className="size-[14px] bg-[#ccffff]" />
          <span className="mr-0.5 flex h-4 w-[38px] items-center justify-center bg-black text-white">G</span>
          <select aria-label="Load case" className="h-5 min-w-0 flex-1 appearance-none bg-transparent outline-none"><option>LC1</option></select>
          <span className="mr-[30px] h-5 w-px bg-white" />
          <Chevron />
        </div>
        <button type="button" aria-label="Previous" className="flex h-6 w-5 shrink-0 items-center justify-center bg-[#c8c8cc]">
          <svg width="5" height="8" viewBox="0 0 5 8"><path d="M5 0v8L0 4z" fill="#444" /></svg>
        </button>
        <button type="button" aria-label="Next" className="flex h-6 w-5 shrink-0 items-center justify-center bg-[#e6e7f2]">
          <svg width="5" height="8" viewBox="0 0 5 8"><path d="M0 0v8l5-4z" fill="#000" /></svg>
        </button>
        <ToolItems items={['filterX', 'v', 'eyeLoad', 'xxxLoad']} />
        <Tool name="eyeArrow" active />
        <Tool name="xxxArrow" />
        <Tool name="eyeGrid" active />
        <DropArrow active />
        <ToolItems items={['eyeWedge', 'xxxWedge', '|']} />
        <div className="ml-auto flex h-full items-center">
          <More />
          <Grip />
          <Tool name="findX" />
          <More />
        </div>
      </div>

      <div className="flex h-[35px] shrink-0 items-center border-t border-[#e2e2e2] bg-[#f6f6f6] pb-0.5">
        <Grip first />
        <ToolItems items={ROW2} />
        <div className="ml-auto flex h-full items-center">
          <More />
          <Grip />
          <div className="relative flex h-6 w-[151px] items-center bg-[#e6e7f2] pl-[5px] text-[13px]">
            <span className="size-[14px] bg-[#ccffff]" />
            <select aria-label="Coordinate system" className="h-6 flex-1 appearance-none bg-transparent pl-1.5 outline-none"><option>1 - Global XYZ</option></select>
            <Chevron />
          </div>
          <More />
          <Grip />
          <Tool name="gridTri" />
          <DropArrow />
          <More />
        </div>
      </div>

      <main className="relative flex-1">
        <span className="absolute left-[5px] top-[5px] text-[14px]">LC1</span>
        <Model />
        <div className="absolute right-[9px] top-2"><NavCube /></div>
        <svg width="100" height="80" viewBox="30 942 100 80" className="absolute bottom-0 left-[29px]">
          <Axes x={62} y={961} />
        </svg>
      </main>

      <StatusBar />
      <Dialog />
    </div>
  );
}
